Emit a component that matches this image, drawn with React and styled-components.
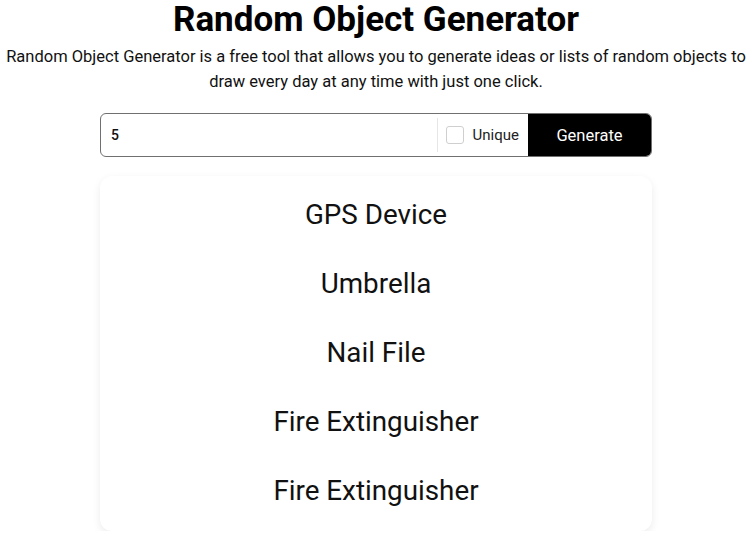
import React from "react";
import styled, { createGlobalStyle } from "styled-components";

const Global = createGlobalStyle`
  html, body { margin: 0; padding: 0; background: #fff; }
  body { font-family: Roboto, "Liberation Sans", sans-serif; color: #000; }
`;

const Page = styled.div`
  width: 752px;
  display: flex;
  flex-direction: column;
  align-items: center;
`;

const Title = styled.h1`
  margin: 0;
  font-size: 35px;
  line-height: 40px;
  font-weight: 700;
  text-align: center;
`;

const Intro = styled.p`
  margin: 4px 0 0;
  font-size: 16.5px;
  line-height: 25px;
  text-align: center;
  color: #111;
  white-space: nowrap;
`;

const Bar = styled.div`
  margin-top: 19px;
  width: 552px;
  height: 44px;
  box-sizing: border-box;
  display: flex;
  align-items: stretch;
  border: 1px solid #707070;
  border-radius: 6px;
  overflow: hidden;
`;

const CountInput = styled.input`
  flex: 1;
  min-width: 0;
  border: none;
  outline: none;
  padding: 0 10px;
  font-family: inherit;
  font-size: 14px;
  font-weight: 500;
  color: #111;
  background: transparent;
`;

const UniqueLabel = styled.label`
  display: flex;
  align-items: center;
  gap: 9px;
  padding: 0 9px 0 8px;
  border-left: 1px solid #e6e6e6;
  margin: 4px 0;
  font-size: 15px;
  color: #222;
`;

const Box = styled.span`
  width: 16px;
  height: 16px;
  border: 1px solid #cfcfcf;
  border-radius: 3px;
  background: #fff;
`;

const GenerateButton = styled.button`
  width: 123px;
  border: none;
  background: #000;
  color: #fff;
  font-family: inherit;
  font-size: 16.5px;
  font-weight: 400;
  cursor: pointer;
`;

const Card = styled.ul`
  list-style: none;
  margin: 19px 0 0;
  padding: 4px 0 6px;
  width: 552px;
  box-sizing: border-box;
  background: #fff;
  border-radius: 12px;
  box-shadow: 0 3px 9px rgba(0, 0, 0, 0.08);
  display: flex;
  flex-direction: column;
`;

const Item = styled.li`
  height: 69px;
  display: flex;
  align-items: center;
  justify-content: center;
  font-size: 27.8px;
  color: #111;
`;

const items = ["GPS Device", "Umbrella", "Nail File", "Fire Extinguisher", "Fire Extinguisher"];

export default function App() {
  return (
    <Page>
      <Global />
      <Title>Random Object Generator</Title>
      <Intro>
        Random Object Generator is a free tool that allows you to generate ideas or lists of random objects to
        <br />
        draw every day at any time with just one click.
      </Intro>
      <Bar>
        <CountInput defaultValue="5" />
        <UniqueLabel>
          <Box />
          Unique
        </UniqueLabel>
        <GenerateButton>Generate</GenerateButton>
      </Bar>
      <Card>
        {items.map((t, i) => (
          <Item key={i}>{t}</Item>
        ))}
      </Card>
    </Page>
  );
}
